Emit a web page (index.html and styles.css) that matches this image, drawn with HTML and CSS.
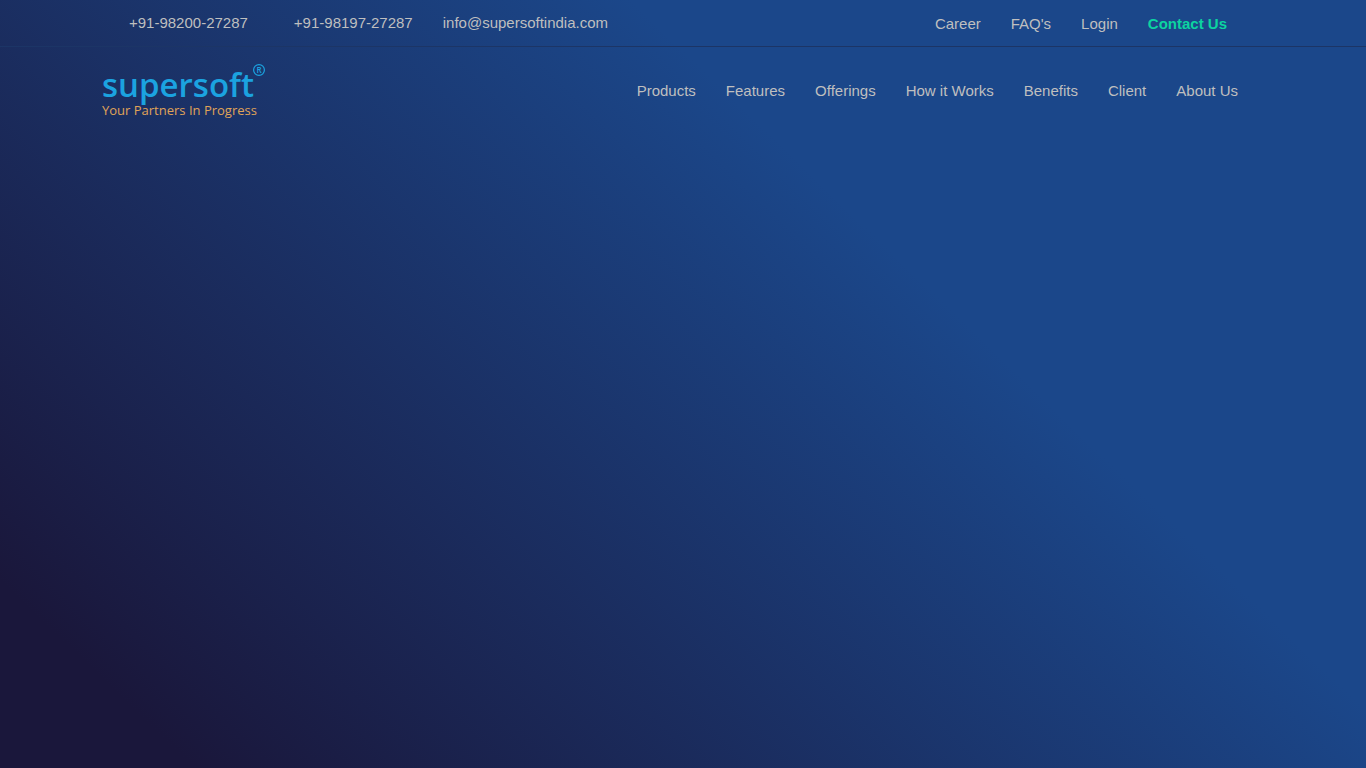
FILE: index.html
```html
<!DOCTYPE html>
<html lang="en">
<head>
    <meta charset="UTF-8">
    <meta name="viewport" content="width=device-width, initial-scale=1.0">
    <title>Supersoft - Your Partners In Progress</title>
    <link rel="stylesheet" href="styles.css">
</head>
<body>
    <header>
        <div class="top-bar">
            <div class="container">
                <ul class="contact-info">
                    <li class="phone"><a href="tel:+919820027287">+91-98200-27287</a></li>
                    <li><a href="tel:+919819727287">+91-98197-27287</a></li>
                    <li><a href="mailto:info@supersoftindia.com">info@supersoftindia.com</a></li>
                </ul>
                <ul class="top-links">
                    <li><a href="#">Career</a></li>
                    <li><a href="#">FAQ's</a></li>
                    <li><a href="#">Login</a></li>
                    <li><a class="contact-link" href="#">Contact Us</a></li>
                </ul>
            </div>
        </div>
        <div class="main-nav">
            <div class="container">
                <a class="logo" href="#">
                    <svg width="166" height="60" viewBox="0 0 166 60">
                        <text class="logo-name" x="0" y="36">supersoft</text>
                        <text class="logo-tagline" x="0" y="54">Your Partners In Progress</text>
                        <circle class="logo-ring" cx="157" cy="9" r="5.4"/>
                        <text class="logo-mark" x="157" y="12" text-anchor="middle">R</text>
                    </svg>
                </a>
                <nav>
                    <ul class="menu">
                        <li><a href="#">Products</a></li>
                        <li><a href="#">Features</a></li>
                        <li><a href="#">Offerings</a></li>
                        <li><a href="#">How it Works</a></li>
                        <li><a href="#">Benefits</a></li>
                        <li><a href="#">Client</a></li>
                        <li><a href="#">About Us</a></li>
                    </ul>
                </nav>
            </div>
        </div>
    </header>
</body>
</html>
```
FILE: styles.css
```css
* {
    box-sizing: border-box;
}
body {
    margin: 0;
    min-height: 100vh;
    font-family: "Liberation Sans", Arial, sans-serif;
    font-size: 15px;
    line-height: 20px;
    color: #bfbfbf;
    background: linear-gradient(44deg, #1a173b 9%, #1b478a 66%);
}
ul {
    list-style: none;
    margin: 0;
    padding: 0;
    display: flex;
    gap: 30px;
}
a {
    color: inherit;
    text-decoration: none;
}
a:hover {
    color: #0cd4a0;
}
.container {
    max-width: 1140px;
    margin: 0 auto;
    padding: 0 15px;
    display: flex;
    justify-content: space-between;
    align-items: center;
}
.top-bar {
    padding: 12px 0;
    border-bottom: 1px solid #1c3566;
}
.contact-info {
    padding-left: 1px;
}
.phone {
    margin-right: 16px;
}
.top-links {
    padding: 2px 11px 0 0;
}
.contact-link {
    color: #0cd4a0;
    font-weight: bold;
}
.main-nav {
    padding: 14px 0;
}
.logo {
    margin-left: -26px;
}
.logo svg {
    display: block;
}
.logo-name {
    font-family: "Open Sans", "Noto Sans", sans-serif;
    font-size: 33px;
    font-weight: 600;
    fill: #1ba3e0;
}
.logo-tagline {
    font-family: "Open Sans", "Noto Sans", sans-serif;
    font-size: 13px;
    fill: #e0a458;
}
.logo-ring {
    fill: none;
    stroke: #1ba3e0;
    stroke-width: 1.2;
}
.logo-mark {
    font-family: "Open Sans", "Noto Sans", sans-serif;
    font-size: 8px;
    font-weight: 600;
    fill: #1ba3e0;
}
```
